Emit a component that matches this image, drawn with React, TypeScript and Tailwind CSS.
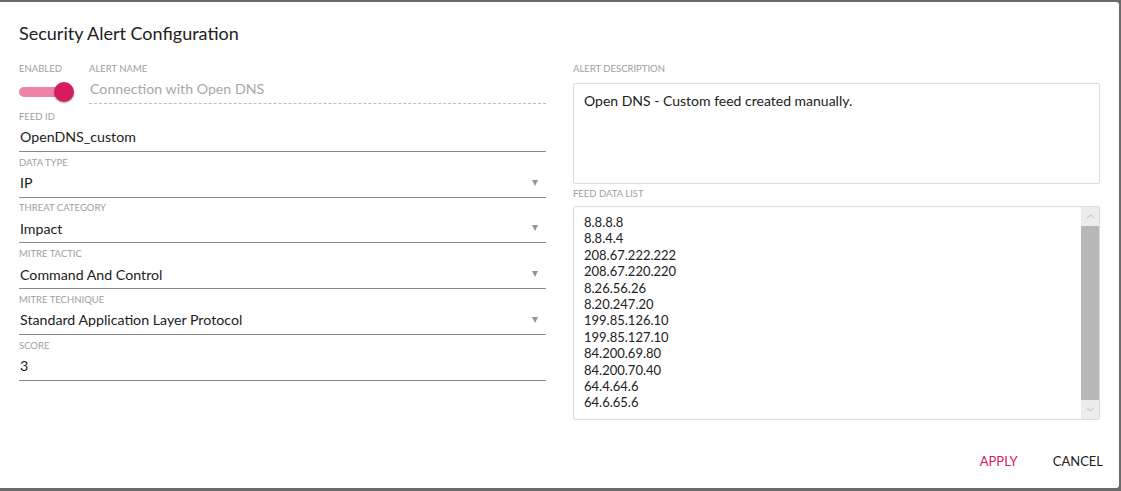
import { ChevronDown, ChevronUp } from "lucide-react";

const ips = [
  "8.8.8.8",
  "8.8.4.4",
  "208.67.222.222",
  "208.67.220.220",
  "8.26.56.26",
  "8.20.247.20",
  "199.85.126.10",
  "199.85.127.10",
  "84.200.69.80",
  "84.200.70.40",
  "64.4.64.6",
  "64.6.65.6",
];

function Label({ children }: { children: React.ReactNode }) {
  return (
    <div className="h-[12px] text-[9.5px] leading-[12px] uppercase text-[#9e9e9e]">
      {children}
    </div>
  );
}

function Field({
  label,
  value,
  select,
}: {
  label: string;
  value: string;
  select?: boolean;
}) {
  return (
    <div className="flex flex-col pt-[4.8px]">
      <Label>{label}</Label>
      <div className="flex h-[29px] items-center justify-between border-b border-[#8a8a8a] pl-[1px] pr-[8px] text-[14.2px] text-[#212121]">
        <span>{value}</span>
        {select && (
          <span className="h-0 w-0 border-x-[3.5px] border-t-[6px] border-x-transparent border-t-[#939393]" />
        )}
      </div>
    </div>
  );
}

export default function App() {
  return (
    <div
      className="h-[491px] w-[1121px] bg-[#6b6b6b] pt-[2px] pr-[2px] pb-[3px]"
      style={{ fontFamily: "Lato, 'Open Sans', sans-serif" }}
    >
      <div className="flex h-full flex-col rounded-r-[3px] bg-white">
        <h1 className="px-[19px] pt-[20px] text-[18px] leading-[22px] text-[#212121]">
          Security Alert Configuration
        </h1>

        <div className="mt-[19px] flex gap-[27px] px-[19px]">
          {/* left column */}
          <div className="flex w-[527px] flex-col">
            <div className="mb-[2px] flex">
              <div className="flex w-[70px] flex-col">
                <Label>Enabled</Label>
                <div className="relative mt-[7px] h-[20px] w-[56px]">
                  <div className="absolute left-0 top-[5px] h-[10px] w-[50px] rounded-full bg-[#ef82a8]" />
                  <div className="absolute left-[35px] top-0 h-[20px] w-[20px] rounded-full bg-[#d81b60] shadow-[0_1px_2px_rgba(0,0,0,0.35)]" />
                </div>
              </div>
              <div className="flex flex-1 flex-col">
                <Label>Alert Name</Label>
                <div className="flex h-[29px] items-center border-b border-dashed border-[#bdbdbd] pl-[1px] text-[14.2px] text-[#a8a8a8]">
                  Connection with Open DNS
                </div>
              </div>
            </div>
            <Field label="Feed ID" value="OpenDNS_custom" />
            <Field label="Data Type" value="IP" select />
            <Field label="Threat Category" value="Impact" select />
            <Field label="Mitre Tactic" value="Command And Control" select />
            <Field
              label="Mitre Technique"
              value="Standard Application Layer Protocol"
              select
            />
            <Field label="Score" value="3" />
          </div>

          {/* right column */}
          <div className="flex w-[527px] flex-col">
            <Label>Alert Description</Label>
            <div className="mt-[8px] h-[101px] rounded-[2px] border border-[#dcdcdc] px-[10px] pt-[8px] text-[14px] leading-[18px] text-[#212121]">
              Open DNS - Custom feed created manually.
            </div>
            <div className="mt-[4px]">
              <Label>Feed Data List</Label>
            </div>
            <div className="mt-[6px] flex h-[214px] rounded-[2px] border border-[#dcdcdc]">
              <div className="flex-1 px-[10px] pt-[7px] text-[13px] leading-[16.4px] text-[#212121]">
                {ips.map((ip) => (
                  <div key={ip}>{ip}</div>
                ))}
              </div>
              <div className="flex w-[18px] flex-col bg-[#ececec]">
                <div className="flex h-[19px] items-center justify-center">
                  <ChevronUp size={13} strokeWidth={1.2} className="text-[#9a9a9a]" />
                </div>
                <div className="flex-1 bg-[#b8b8b8]" />
                <div className="flex h-[19px] items-center justify-center">
                  <ChevronDown size={13} strokeWidth={1.2} className="text-[#9a9a9a]" />
                </div>
              </div>
            </div>
          </div>
        </div>

        <div className="mt-auto flex justify-end gap-[35px] pr-[16px] pb-[17px] text-[13px]">
          <button className="uppercase text-[#d81b60]">Apply</button>
          <button className="uppercase text-[#212121]">Cancel</button>
        </div>
      </div>
    </div>
  );
}
